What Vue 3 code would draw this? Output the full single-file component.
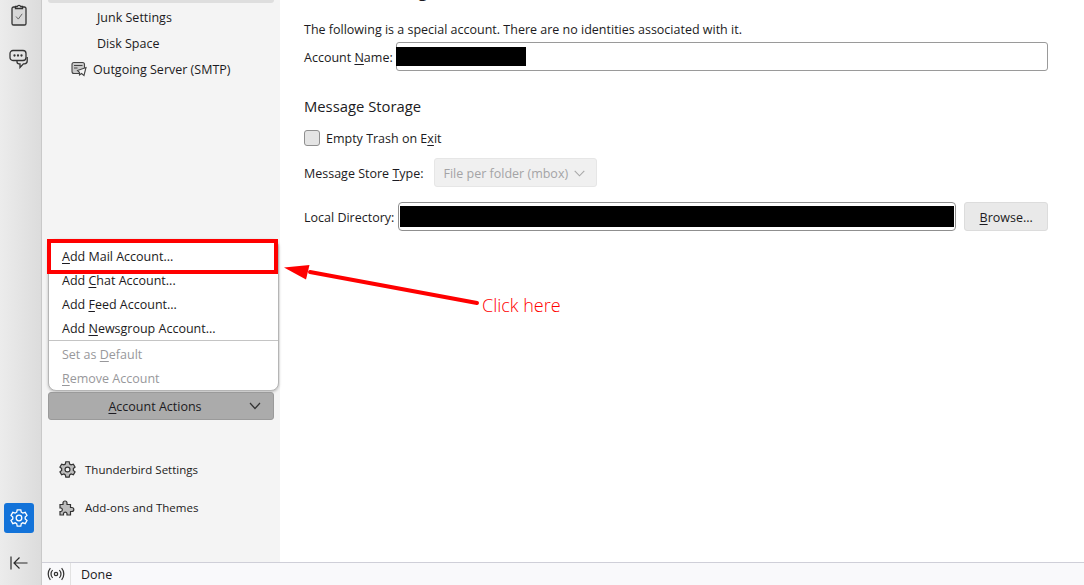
<script setup>
const tree = [
  { label: 'Junk Settings' },
  { label: 'Disk Space' },
]
</script>

<template>
  <div class="app">
    <aside class="spaces">
      <div class="spaces-top">
        <button class="space-btn">
          <svg width="16" height="22" viewBox="0 0 16 22" fill="none" stroke="#333" stroke-width="1.300">
            <path d="M4.500 3H2.600A1.600 1.600 0 0 0 1 4.600v14.800A1.600 1.600 0 0 0 2.600 21h10.800a1.600 1.600 0 0 0 1.600-1.600V4.600A1.600 1.600 0 0 0 13.400 3h-1.900" fill="#d8d8d8"/>
            <path d="M4.500 4.500V2.500h1.800a1.800 1.800 0 0 1 3.400 0h1.800v2z" fill="#e8e8e8"/>
            <path d="M5 12.500l2.300 2.600 3.900-5.300" stroke="#666" stroke-width="1"/>
          </svg>
        </button>
        <button class="space-btn">
          <svg width="20" height="20" viewBox="0 0 20 20" fill="none" stroke="#333" stroke-width="1.300">
            <path d="M4 1.500h10a3 3 0 0 1 3 3v4a3 3 0 0 1-3 3H4a3 3 0 0 1-3-3v-4a3 3 0 0 1 3-3z"/>
            <path d="M8 11.500v1.300a2 2 0 0 0 2 2h1v3.700l3.400-3.700h1a2.800 2.800 0 0 0 2.800-2.800V8"/>
            <circle cx="5.500" cy="6.500" r=".5" fill="#333"/><circle cx="9" cy="6.500" r=".5" fill="#333"/><circle cx="12.500" cy="6.500" r=".5" fill="#333"/>
          </svg>
        </button>
      </div>
      <div class="spaces-bottom">
        <button class="settings-btn">
          <svg width="20" height="20" viewBox="0 0 20 20" fill="none" stroke="#fff" stroke-width="1.300">
            <path d="M8.200 1.800h3.600l.5 2.400 1.500.9 2.400-.8 1.800 3.100-1.800 1.600v1.900l1.800 1.600-1.800 3.100-2.400-.8-1.500.9-.5 2.400H8.200l-.5-2.400-1.500-.9-2.400.8-1.800-3.100 1.800-1.600V9L2 7.400l1.800-3.100 2.400.8 1.500-.9z"/>
            <circle cx="10" cy="10" r="2.800"/>
          </svg>
        </button>
        <button class="collapse-btn">
          <svg width="18" height="14" viewBox="0 0 18 14" fill="none" stroke="#2b2b2b" stroke-width="1.200">
            <path d="M1 .5v13M17.500 7H4M9.500 1.500L4 7l5.500 5.500"/>
          </svg>
        </button>
      </div>
    </aside>

    <div class="column">
      <div class="panels">
        <nav class="tree-panel">
          <div class="tree-selected"></div>
          <div v-for="item in tree" :key="item.label" class="tree-row sub">{{ item.label }}</div>
          <div class="tree-row smtp">
            <svg width="16" height="16" viewBox="0 0 16 16" fill="none" stroke="#444" stroke-width="1.100">
              <rect x="1" y="1.500" width="12.500" height="11" rx="2" fill="#c9c9c9"/>
              <path d="M3 4.500h8.500M3 7h3.500"/>
              <path d="M6.500 9.500l8.500-3-2 8-2.500-2-2 1.500v-2.500z" fill="#f4f4f4"/>
            </svg>
            <span>Outgoing Server (SMTP)</span>
          </div>

          <div class="actions">
            <div class="menu">
              <div class="menu-item"><u>A</u>dd Mail Account...</div>
              <div class="menu-item">Add <u>C</u>hat Account...</div>
              <div class="menu-item">Add <u>F</u>eed Account...</div>
              <div class="menu-item">Add <u>N</u>ewsgroup Account...</div>
              <div class="menu-sep"></div>
              <div class="menu-item disabled">Set as <u>D</u>efault</div>
              <div class="menu-item disabled"><u>R</u>emove Account</div>
            </div>
            <button class="actions-btn">
              <span><u>A</u>ccount Actions</span>
              <svg class="chev" width="12" height="8" viewBox="0 0 12 8" fill="none" stroke="#333" stroke-width="1.200"><path d="M1 1l5 5.500L11 1"/></svg>
            </button>
          </div>

          <div class="links">
            <div class="link">
              <svg width="17" height="17" viewBox="1 1 18 18" fill="#bdbdbd" stroke="#333" stroke-width="1.300">
                <path d="M8.200 1.800h3.600l.5 2.400 1.500.9 2.400-.8 1.800 3.100-1.800 1.600v1.900l1.800 1.600-1.800 3.100-2.400-.8-1.500.9-.5 2.400H8.200l-.5-2.400-1.500-.9-2.400.8-1.800-3.100 1.800-1.600V9L2 7.400l1.800-3.100 2.400.8 1.500-.9z"/>
                <circle cx="10" cy="10" r="2.600" fill="#f3f3f3"/>
              </svg>
              <span>Thunderbird Settings</span>
            </div>
            <div class="link">
              <svg width="17" height="17" viewBox="0 0 17 17" fill="#bdbdbd" stroke="#333" stroke-width="1.200">
                <path d="M1 5.500h3V4a2 2 0 0 1 4 0v1.500h3.500v3h1.300a2 2 0 0 1 0 4h-1.300V16H8v-1.500a1.800 1.800 0 0 0-3.500 0V16H1v-3.500h1a1.800 1.800 0 0 0 0-3.500H1z"/>
              </svg>
              <span>Add-ons and Themes</span>
            </div>
          </div>
        </nav>

        <main class="content">
          <h2 class="cut-title">Account Settings</h2>
          <p class="intro">The following is a special account. There are no identities associated with it.</p>
          <div class="name-row">
            <label>Account <u>N</u>ame:</label>
            <div class="input name-input"><span class="redact name-redact"></span></div>
          </div>
          <h3 class="section">Message Storage</h3>
          <label class="check-row"><span class="check"></span><span>Empty Trash on E<u>x</u>it</span></label>
          <div class="store-row">
            <label>Message Store <u>T</u>ype:</label>
            <div class="select">
              <span>File per folder (mbox)</span>
              <svg width="11" height="7" viewBox="0 0 11 7" fill="none" stroke="#a8a8a8" stroke-width="1.100"><path d="M.7.8l4.800 5 4.800-5"/></svg>
            </div>
          </div>
          <div class="dir-row">
            <label>Local Directory:</label>
            <div class="input dir-input"><span class="redact dir-redact"></span></div>
            <button class="browse"><u>B</u>rowse...</button>
          </div>
        </main>
      </div>
      <footer class="status">
        <div class="status-icon">
          <svg width="18" height="14" viewBox="0 0 16 12" fill="none" stroke="#333" stroke-width="1.100">
            <circle cx="8" cy="6" r="1.500"/>
            <path d="M5 2.500a5 5 0 0 0 0 7M11 2.500a5 5 0 0 1 0 7M3 .8a8 8 0 0 0 0 10.400M13 .8a8 8 0 0 1 0 10.400"/>
          </svg>
        </div>
        <span class="status-text">Done</span>
      </footer>
    </div>

    <div class="highlight"></div>
    <svg class="arrow" width="210" height="60" viewBox="0 0 210 60">
      <path d="M197 43L30 12" stroke="#f00" stroke-width="4" stroke-linecap="round" fill="none"/>
      <path d="M4 7.500L29.500 5 26 19.500z" fill="#f00"/>
    </svg>
    <span class="click-here">Click here</span>
  </div>
</template>

<style scoped>
.app {
  position: relative;
  display: flex;
  width: 1084px;
  height: 585px;
  overflow: hidden;
  background: #fff;
  font-family: "Open Sans", "Noto Sans", sans-serif;
  font-size: 12.5px;
  color: #1c1b22;
}
u { text-underline-offset: 2px; text-decoration-thickness: 1px; }
button { font: inherit; color: inherit; padding: 0; }

.spaces {
  width: 41px;
  flex: none;
  border-right: 1px solid #c9c9c9;
  background: linear-gradient(90deg, #ececec, #dcdcdc);
  display: flex;
  flex-direction: column;
  justify-content: space-between;
  align-items: center;
}
.spaces-top { display: flex; flex-direction: column; align-items: center; gap: 20px; margin-top: 3px; margin-left: -3px; }
.space-btn { border: 0; background: none; height: 24px; display: flex; align-items: center; justify-content: center; }
.spaces-bottom { display: flex; flex-direction: column; align-items: center; margin-left: -3px; margin-bottom: 15px; }
.settings-btn { width: 30px; height: 30px; border: 0; border-radius: 3px; background: #1373d9; display: flex; align-items: center; justify-content: center; }
.collapse-btn { border: 0; background: none; margin-top: 23px; height: 14px; display: flex; }

.column { flex: 1; display: flex; flex-direction: column; min-width: 0; }
.panels { flex: 1; display: flex; min-height: 0; }

.tree-panel {
  width: 238px;
  flex: none;
  background: #f4f4f4;
  display: flex;
  flex-direction: column;
  padding: 0 6px;
  box-sizing: border-box;
}
.tree-selected { height: 3px; background: #dedede; border-radius: 0 0 3px 3px; margin-bottom: 1px; }
.tree-row { height: 26px; display: flex; align-items: center; white-space: nowrap; }
.tree-row.sub { padding-left: 49px; }
.smtp { padding-left: 23px; gap: 6px; }

.actions { position: relative; margin-top: 310px; }
.actions-btn {
  position: relative;
  width: 226px;
  height: 28px;
  box-sizing: border-box;
  background: #ababab;
  border: 1px solid #9a9a9a;
  border-radius: 3px;
  display: flex;
  align-items: center;
  justify-content: center;
  padding-right: 12px;
}
.chev { position: absolute; right: 12px; top: 9px; }
.menu {
  position: absolute;
  left: 0;
  bottom: 29px;
  width: 231px;
  background: #fff;
  border: 1px solid #b5b5b5;
  border-radius: 8px;
  box-sizing: border-box;
  padding: 4px 0 0;
  box-shadow: 0 1px 3px rgba(0, 0, 0, .25);
}
.menu-item { height: 24px; line-height: 26px; padding-left: 13px; white-space: nowrap; }
.menu-item.disabled { color: #98989b; }
.menu-sep { border-top: 1px solid #c4c4c4; margin: 0 0 1px; height: 0; }

.links { display: flex; flex-direction: column; gap: 18px; margin-top: 39px; padding-left: 11px; }
.link { display: flex; align-items: center; gap: 9px; height: 20px; white-space: nowrap; font-size: 11.5px; }

.content { flex: 1; min-width: 0; padding: 0 36px 0 24px; }
.cut-title { font-size: 17px; font-weight: 500; margin: -21px 0 0; line-height: 23px; }
.intro { margin: 20px 0 0; line-height: 16px; }
.name-row { display: flex; align-items: center; gap: 3px; margin-top: 4px; }
label { white-space: nowrap; }
.name-row label, .store-row label, .dir-row label { padding-top: 2px; }
.input { box-sizing: border-box; background: #fff; border: 1px solid #9a9a9a; border-radius: 3px; display: flex; align-items: center; }
.name-input { flex: 1; height: 29px; }
.name-redact { width: 130px; height: 19px; margin-left: -1px; }
.redact { background: #000; display: block; }
.section { font-size: 14.8px; font-weight: 500; margin: 25px 0 0; line-height: 20px; }
.check-row { display: flex; align-items: center; gap: 6px; margin-top: 13px; height: 18px; }
.check { width: 14px; height: 14px; background: #e4e4e4; border: 1px solid #8f8f8f; border-radius: 3px; }
.store-row { display: flex; align-items: center; gap: 10px; margin-top: 11px; height: 29px; }
.select {
  box-sizing: border-box;
  width: 163px; height: 29px;
  display: flex; align-items: center; gap: 6px;
  padding: 2px 0 0 9px;
  background: #f0f0f0;
  border: 1px solid #e6e6e6;
  border-radius: 3px;
  color: #a4a4a6;
  white-space: nowrap;
}
.dir-row { display: flex; align-items: center; gap: 4px; margin-top: 15px; }
.dir-input { width: 558px; height: 29px; padding-left: 1px; border-color: #8f8f8f; border-radius: 4px; margin-right: 4px; }
.dir-redact { width: 554px; height: 21px; }
.browse { flex: 1; height: 29px; padding-top: 2px; background: #e9e9e9; border: 1px solid #dcdcdc; border-radius: 3px; }

.status { height: 23px; flex: none; box-sizing: border-box; border-top: 1px solid #cfcfd8; display: flex; align-items: center; background: #f9f9fb; }
.status-icon { width: 28px; display: flex; justify-content: center; border-right: 1px solid #e2e2e2; height: 22px; align-items: center; }
.status-text { padding-left: 10px; }

.highlight {
  position: absolute;
  left: 47px; top: 239px;
  width: 231px; height: 35px;
  box-sizing: border-box;
  border: 4px solid #f00;
}
.arrow { position: absolute; left: 280px; top: 260px; }
.click-here { position: absolute; left: 482px; top: 293px; color: #f00; font-size: 18px; font-weight: 300; line-height: 24px; }
</style>
